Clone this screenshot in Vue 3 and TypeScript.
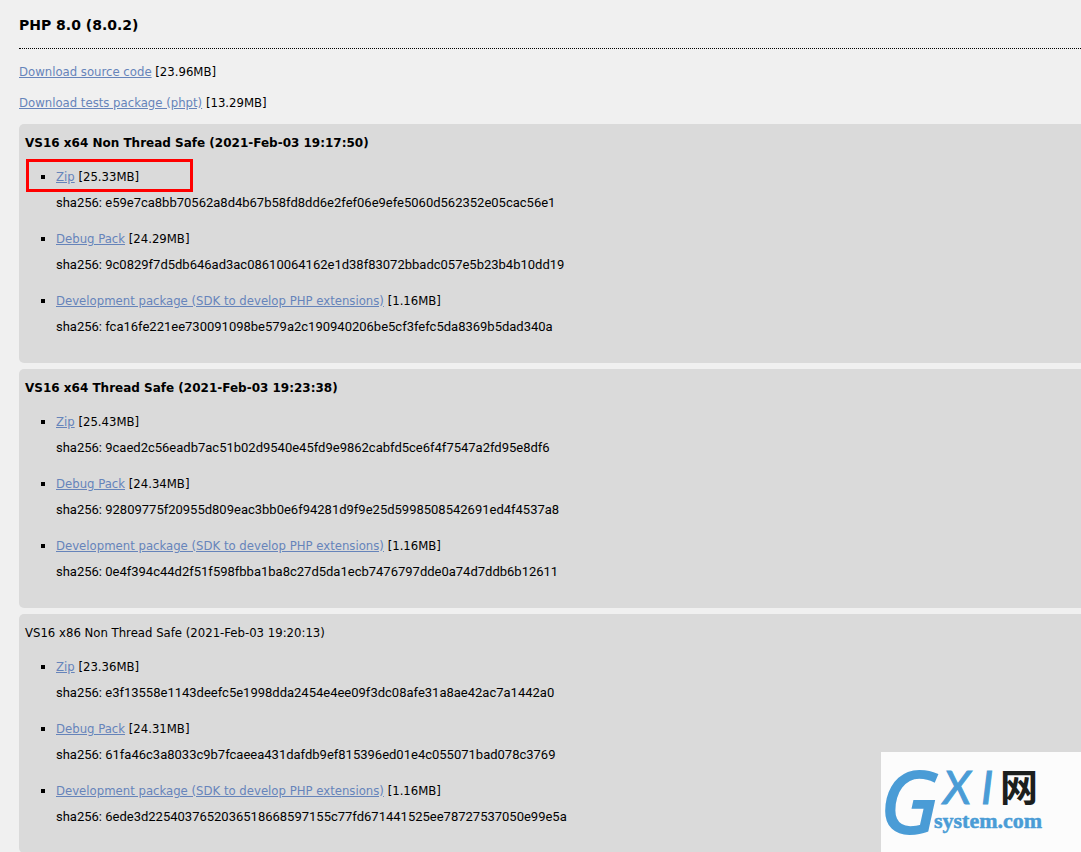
<script setup lang="ts">
interface Download {
  name: string
  size: string
  sha256: string
  highlighted?: boolean
}

interface Build {
  title: string
  bold: boolean
  downloads: Download[]
}

const sdk = 'Development package (SDK to develop PHP extensions)'

const sources = [
  { name: 'Download source code', size: '23.96MB' },
  { name: 'Download tests package (phpt)', size: '13.29MB' },
]

const builds: Build[] = [
  {
    title: 'VS16 x64 Non Thread Safe (2021-Feb-03 19:17:50)',
    bold: true,
    downloads: [
      { name: 'Zip', size: '25.33MB', sha256: 'e59e7ca8bb70562a8d4b67b58fd8dd6e2fef06e9efe5060d562352e05cac56e1', highlighted: true },
      { name: 'Debug Pack', size: '24.29MB', sha256: '9c0829f7d5db646ad3ac08610064162e1d38f83072bbadc057e5b23b4b10dd19' },
      { name: sdk, size: '1.16MB', sha256: 'fca16fe221ee730091098be579a2c190940206be5cf3fefc5da8369b5dad340a' },
    ],
  },
  {
    title: 'VS16 x64 Thread Safe (2021-Feb-03 19:23:38)',
    bold: true,
    downloads: [
      { name: 'Zip', size: '25.43MB', sha256: '9caed2c56eadb7ac51b02d9540e45fd9e9862cabfd5ce6f4f7547a2fd95e8df6' },
      { name: 'Debug Pack', size: '24.34MB', sha256: '92809775f20955d809eac3bb0e6f94281d9f9e25d5998508542691ed4f4537a8' },
      { name: sdk, size: '1.16MB', sha256: '0e4f394c44d2f51f598fbba1ba8c27d5da1ecb7476797dde0a74d7ddb6b12611' },
    ],
  },
  {
    title: 'VS16 x86 Non Thread Safe (2021-Feb-03 19:20:13)',
    bold: false,
    downloads: [
      { name: 'Zip', size: '23.36MB', sha256: 'e3f13558e1143deefc5e1998dda2454e4ee09f3dc08afe31a8ae42ac7a1442a0' },
      { name: 'Debug Pack', size: '24.31MB', sha256: '61fa46c3a8033c9b7fcaeea431dafdb9ef815396ed01e4c055071bad078c3769' },
      { name: sdk, size: '1.16MB', sha256: '6ede3d2254037652036518668597155c77fd671441525ee78727537050e99e5a' },
    ],
  },
]
</script>

<template>
  <main class="page">
    <h1 class="release">PHP 8.0 (8.0.2)</h1>
    <div class="sources">
      <p v-for="source in sources" :key="source.name" class="source">
        <a href="#">{{ source.name }}</a> [{{ source.size }}]
      </p>
    </div>
    <section v-for="build in builds" :key="build.title" class="build">
      <h2 class="build-title" :class="{ bold: build.bold }">{{ build.title }}</h2>
      <ul class="downloads">
        <li v-for="item in build.downloads" :key="item.name" class="download">
          <div><a href="#">{{ item.name }}</a> [{{ item.size }}]</div>
          <div class="checksum">sha256: {{ item.sha256 }}</div>
          <span v-if="item.highlighted" class="marker"></span>
        </li>
      </ul>
    </section>
    <div class="watermark">
      <svg viewBox="0 0 200 100" role="img" aria-label="GXI网 system.com">
        <text class="initial" x="-1" y="81" font-size="86">G</text>
        <text class="latin" x="62" y="52" font-size="46">X</text>
        <text class="latin" x="100" y="52" font-size="46">I</text>
        <text class="han" x="119" y="49" font-size="38">网</text>
        <text class="domain" x="53" y="76" font-size="22">system.com</text>
      </svg>
    </div>
  </main>
</template>

<style>
body {
  background: #f0f0f0;
}
</style>

<style scoped>
.page {
  padding: 10px 0 0 19px;
  color: #000;
  font: 13px/26px "DejaVu Sans Condensed", "DejaVu Sans", sans-serif;
}

.release {
  margin: 0 0 10px;
  padding-bottom: 8px;
  border-bottom: 1px dotted #000;
  font-family: "DejaVu Sans", sans-serif;
  font-size: 14px;
  line-height: 30px;
}

.sources {
  padding-bottom: 3px;
}

.source {
  margin: 0 0 5px;
}

a {
  color: #6684ba;
}

.build {
  margin-bottom: 6px;
  padding: 6px 0 13px 6px;
  border-radius: 5px 0 0 5px;
  background: #dadada;
}

.build-title {
  margin: 0 0 8px;
  font-size: 13px;
  font-weight: 400;
}

.build-title.bold {
  font-family: "DejaVu Sans", sans-serif;
  font-size: 12px;
  font-weight: 700;
}

.downloads {
  margin: 0;
  padding-left: 31px;
  list-style: square;
}

.download {
  position: relative;
  padding-bottom: 10px;
}

.checksum {
  font-family: Roboto, sans-serif;
}

.marker {
  position: absolute;
  top: -5px;
  left: -30px;
  box-sizing: border-box;
  width: 167px;
  height: 33px;
  border: 3px solid #f00;
  pointer-events: none;
}

.watermark {
  position: fixed;
  right: 0;
  bottom: 0;
  width: 200px;
  height: 100px;
  background: #fcfcfc;
}

.watermark svg {
  display: block;
}

.initial {
  fill: #4a9cd6;
  stroke: #4a9cd6;
  stroke-width: 2;
  font-family: "Noto Sans", sans-serif;
  font-style: italic;
}

.latin {
  fill: #4a9cd6;
  stroke: #4a9cd6;
  stroke-width: 1;
  font-family: Lato, sans-serif;
  font-style: italic;
}

.han {
  fill: #1c1f1e;
  font-family: "Noto Sans CJK SC", sans-serif;
  font-weight: 700;
}

.domain {
  fill: #4a9cd6;
  stroke: #4a9cd6;
  stroke-width: 0.5;
  font-family: "Liberation Serif", serif;
  font-weight: 700;
}
</style>
